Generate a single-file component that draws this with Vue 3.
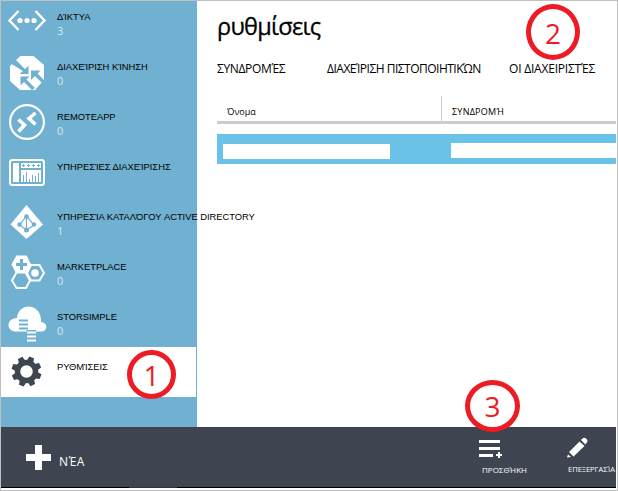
<script setup>
const services = [
  { id: 'net', label: 'ΔΊΚΤΥΑ', count: '3' },
  { id: 'traffic', label: 'ΔΙΑΧΕΊΡΙΣΗ ΚΊΝΗΣΗ', count: '0' },
  { id: 'remote', label: 'REMOTEAPP', count: '0' },
  { id: 'manage', label: 'ΥΠΗΡΕΣΊΕΣ ΔΙΑΧΕΊΡΙΣΗΣ', count: '' },
  { id: 'directory', label: 'ΥΠΗΡΕΣΊΑ ΚΑΤΑΛΌΓΟΥ ACTIVE DIRECTORY', count: '1' },
  { id: 'market', label: 'MARKETPLACE', count: '0' },
  { id: 'stor', label: 'STORSIMPLE', count: '0' },
  { id: 'settings', label: 'ΡΥΘΜΊΣΕΙΣ', count: '' },
]
</script>

<template>
  <div class="portal">
    <div class="body">
      <nav class="sidebar">
        <div v-for="s in services" :key="s.id" class="item" :class="{ active: s.id === 'settings' }">
          <svg class="icon" width="40" height="40" viewBox="0 0 40 40">
            <g v-if="s.id === 'net'" fill="none" stroke="#fff" stroke-width="2.4">
              <path d="M11.500 11 2.500 20.500l9 9.500M28.500 11 37.500 20.500l-9 9.500" />
              <g fill="#fff" stroke="none"><circle cx="13" cy="20.500" r="2.600" /><circle cx="20" cy="20.500" r="2.600" /><circle cx="27" cy="20.500" r="2.600" /></g>
            </g>
            <g v-else-if="s.id === 'traffic'">
              <path fill="#fff" d="M13.500 4h13L37 13v15l-9 10H13L3 29V14l3-3z" />
              <path fill="#70b0d1" d="m4.500 12 4-4.500 9.500 9.500 3.500-3.500V22h-9l3.500-3zM24 18.500h9.500l-3 3 7 7-2.500 2.500-7-7-4 4zM13.500 24.500h9l-3 3 8.500 8.500-3 2-8-8-3.500 3.500z" />
            </g>
            <g v-else-if="s.id === 'remote'" fill="none" stroke="#fff">
              <circle cx="20" cy="20" r="16.900" stroke-width="2.200" />
              <path d="m11.500 17.500 6 5.500-6 6.500M28.500 11l-6.500 5.500 6.500 6" stroke-width="3.600" />
            </g>
            <g v-else-if="s.id === 'manage'">
              <rect x="3" y="8" width="34" height="25" rx="2.500" fill="none" stroke="#fff" stroke-width="2" />
              <path fill="#fff" d="M6 11h6v19H6zM14 11h20v5H14zM14 18h20v12H14z" />
              <path stroke="#70b0d1" fill="none" d="M16.500 23v7M19.500 20v10M22.500 27v3M25.500 23v7M28.500 24v6M31.500 21v9" />
              <path stroke="#70b0d1" d="M15 13.500h3m2 0h3m2 0h3m2 0h3M16.500 12v3m5-3v3m5-3v3m5-3v3" />
            </g>
            <g v-else-if="s.id === 'directory'">
              <path fill="#fff" d="M19.500 3 36 22.500 19.500 37 3.500 22.500z" />
              <path d="m19.500 14-7 9 7 5 7.500-5zM19.500 14v14" stroke="#70b0d1" stroke-width="1.200" fill="none" />
              <g fill="#70b0d1"><circle cx="19.500" cy="14.500" r="2.300" /><circle cx="12.500" cy="22.500" r="2.200" /><circle cx="27" cy="22.500" r="2.200" /><circle cx="19.500" cy="28" r="2.500" /></g>
            </g>
            <g v-else-if="s.id === 'market'" stroke="#fff" stroke-width="2" fill="none">
              <path fill="#fff" d="M10 4.500h9l4 8-4.500 7.500H9.500l-4-7.500z" />
              <path d="M9.500 20.500h9l4.500 8-4 7.500H9.500l-4.500-7.500zM24 13h8.500l4.500 8-4.500 7.500H24l-4-7.500z" />
              <path stroke="#70b0d1" stroke-width="3" d="M14.500 7v11M9 12.500h11" />
              <circle cx="28" cy="21" r="3.800" fill="#fff" stroke="none" />
            </g>
            <g v-else-if="s.id === 'stor'">
              <path fill="#fff" d="M8 29.500c-9-1-9-13 2-13.500 1-15 22-16 24 1v3c8 1 6 9 1 9.500H21z" />
              <path stroke="#70b0d1" stroke-width="2" d="M12 18.500h9M12 22.500h9M12 26.500h9" />
              <path fill="#70b0d1" d="M19.500 28h9.500v4h-9.500z" />
              <path stroke="#fff" stroke-width="2" d="M20 30.500h9M20 34.500h9M20 38.500h9" />
            </g>
            <g v-else transform="translate(19.500 19.500)" fill="#3e4650">
              <circle r="9" fill="none" stroke="#3e4650" stroke-width="5.500" />
              <path v-for="a in 8" :key="a" d="M-3.500-10 -2.500-15H2.500L3.500-10z" :transform="`rotate(${a * 45 + 20})`" />
            </g>
          </svg>
          <div class="words">
            <span class="label">{{ s.label }}</span>
            <span class="count">{{ s.count }}</span>
          </div>
        </div>
      </nav>
      <main>
        <h1>ρυθμίσεις</h1>
        <div class="tabs">
          <span class="t1">ΣΥΝΔΡΟΜΈΣ</span><span class="t2">ΔΙΑΧΕΊΡΙΣΗ ΠΙΣΤΟΠΟΙΗΤΙΚΏΝ</span><span class="t3">ΟΙ ΔΙΑΧΕΙΡΙΣΤΈΣ</span>
        </div>
        <div class="thead"><span>Όνομα</span><span class="sub">ΣΥΝΔΡΟΜΉ</span></div>
        <div class="row"><i class="name"></i><i class="value"></i></div>
      </main>
    </div>
    <footer>
      <div class="new">
        <svg width="25" height="25" viewBox="0 0 25 25"><path fill="#fff" d="M9 0h7v9h9v7h-9v9H9v-9H0V9h9z" /></svg>
        <span>ΝΈΑ</span>
      </div>
      <div class="command add">
        <svg width="24" height="20" viewBox="0 0 24 20"><path stroke="#fff" stroke-width="3" d="M0 2.500h21M0 9.500h21M0 16.500h14" /><path stroke="#fff" stroke-width="2" d="M17 16h6M20 13v6" /></svg>
        <span>ΠΡΟΣΘΉΚΗ</span>
      </div>
      <div class="command edit">
        <svg width="22" height="22" viewBox="0 0 22 22"><path fill="#fff" d="m0 20.500 1-3L4 20zM2 15 12.500 4.500l5 4.500L6.500 19.500zM14 3l1.500-1.500q2-1.500 4 .5t0 4l-1 1.500z" /></svg>
        <span>ΕΠΕΞΕΡΓΑΣΊΑ</span>
      </div>
    </footer>
    <div class="base"><i></i></div>
    <div class="mark m1">1</div>
    <div class="mark m2">2</div>
    <div class="mark m3">3</div>
  </div>
</template>

<style>
body { margin: 0; background: #fff; }
</style>
<style scoped>
.portal { position: relative; box-sizing: border-box; width: 618px; height: 491px; border: 1px solid #c0c0c0; overflow: hidden; background: #fff; color: #000; font-family: "Open Sans", "Noto Sans", sans-serif; }
.body { display: flex; height: 426px; }
.sidebar { width: 196px; flex: none; background: #70b0d1; }
.item { height: 50px; display: flex; padding-left: 6px; box-sizing: border-box; width: 195px; }
.item:first-child { height: 46px; }
.item:first-child .icon { margin-top: -1px; }
.item:first-child .words { padding-top: 8px; }
.icon { flex: none; margin-top: 5px; }
.words { display: flex; flex-direction: column; padding: 12px 0 0 10px; white-space: nowrap; }
.label { font: 9.4px/15px "Liberation Sans", sans-serif; height: 15px; letter-spacing: -0.03px; }
.count { font-size: 11px; line-height: 14px; color: #d3e8f3; }
.active { background: #fff; }
main { flex: 1; min-width: 0; padding-left: 20px; margin-right: 1px; }
h1 { margin: 7px 0 0; font-weight: 400; font-size: 23.5px; line-height: 36px; height: 37px; letter-spacing: -0.7px; -webkit-text-stroke: 0.3px #000; }
.tabs { display: flex; margin-top: 15px; font-size: 12px; line-height: 18px; white-space: nowrap; letter-spacing: -0.5px; }
.t1 { width: 110px; letter-spacing: -0.35px; }
.t2 { width: 182px; }
.t3 { letter-spacing: -0.2px; }
.thead { display: flex; height: 25px; margin-top: 18px; border-bottom: 3px solid #ccc; font-size: 9px; line-height: 31px; }
.thead span { width: 214px; padding-left: 10px; flex: none; }
.thead .sub { width: 150px; border-left: 1px solid #ccc; letter-spacing: 0.25px; }
.row { height: 30px; margin-top: 10px; background: #6ac2e9; display: flex; }
.name { background: #fff; width: 167px; height: 15px; margin: 10px 61px 0 6px; }
.value { background: #fff; flex: 1; height: 15px; margin-top: 9px; }
footer { display: flex; width: 615px; height: 60px; background: #3e4550; color: #fff; }
.new { display: flex; flex: none; box-sizing: border-box; padding: 18px 0 0 25px; width: 478px; gap: 8px; font-size: 12px; line-height: 33px; letter-spacing: 0.6px; }
.command { display: flex; flex: none; flex-direction: column; white-space: nowrap; font-size: 7.500px; line-height: 12px; }
.add { width: 88px; padding-top: 12px; }
.add span { padding-left: 3px; margin-top: 5px; font-size: 8px; }
.edit { padding-top: 10px; }
.edit span { margin: 4px 0 0 1px; }
.base { width: 615px; height: 1px; background: #000; }
.base i { display: block; margin-left: 128px; width: 48px; height: 1px; background: #333; }
.mark { position: absolute; box-sizing: border-box; border: 5px solid #ed1c24; border-radius: 50%; color: #ed1c24; text-align: center; font-size: 28px; }
.m1 { left: 126px; top: 349px; width: 49px; height: 49px; line-height: 41px; }
.m2 { left: 525px; top: 3px; width: 54px; height: 56px; line-height: 48px; }
.m3 { left: 464px; top: 379px; width: 55px; height: 52px; line-height: 43px; }
</style>
